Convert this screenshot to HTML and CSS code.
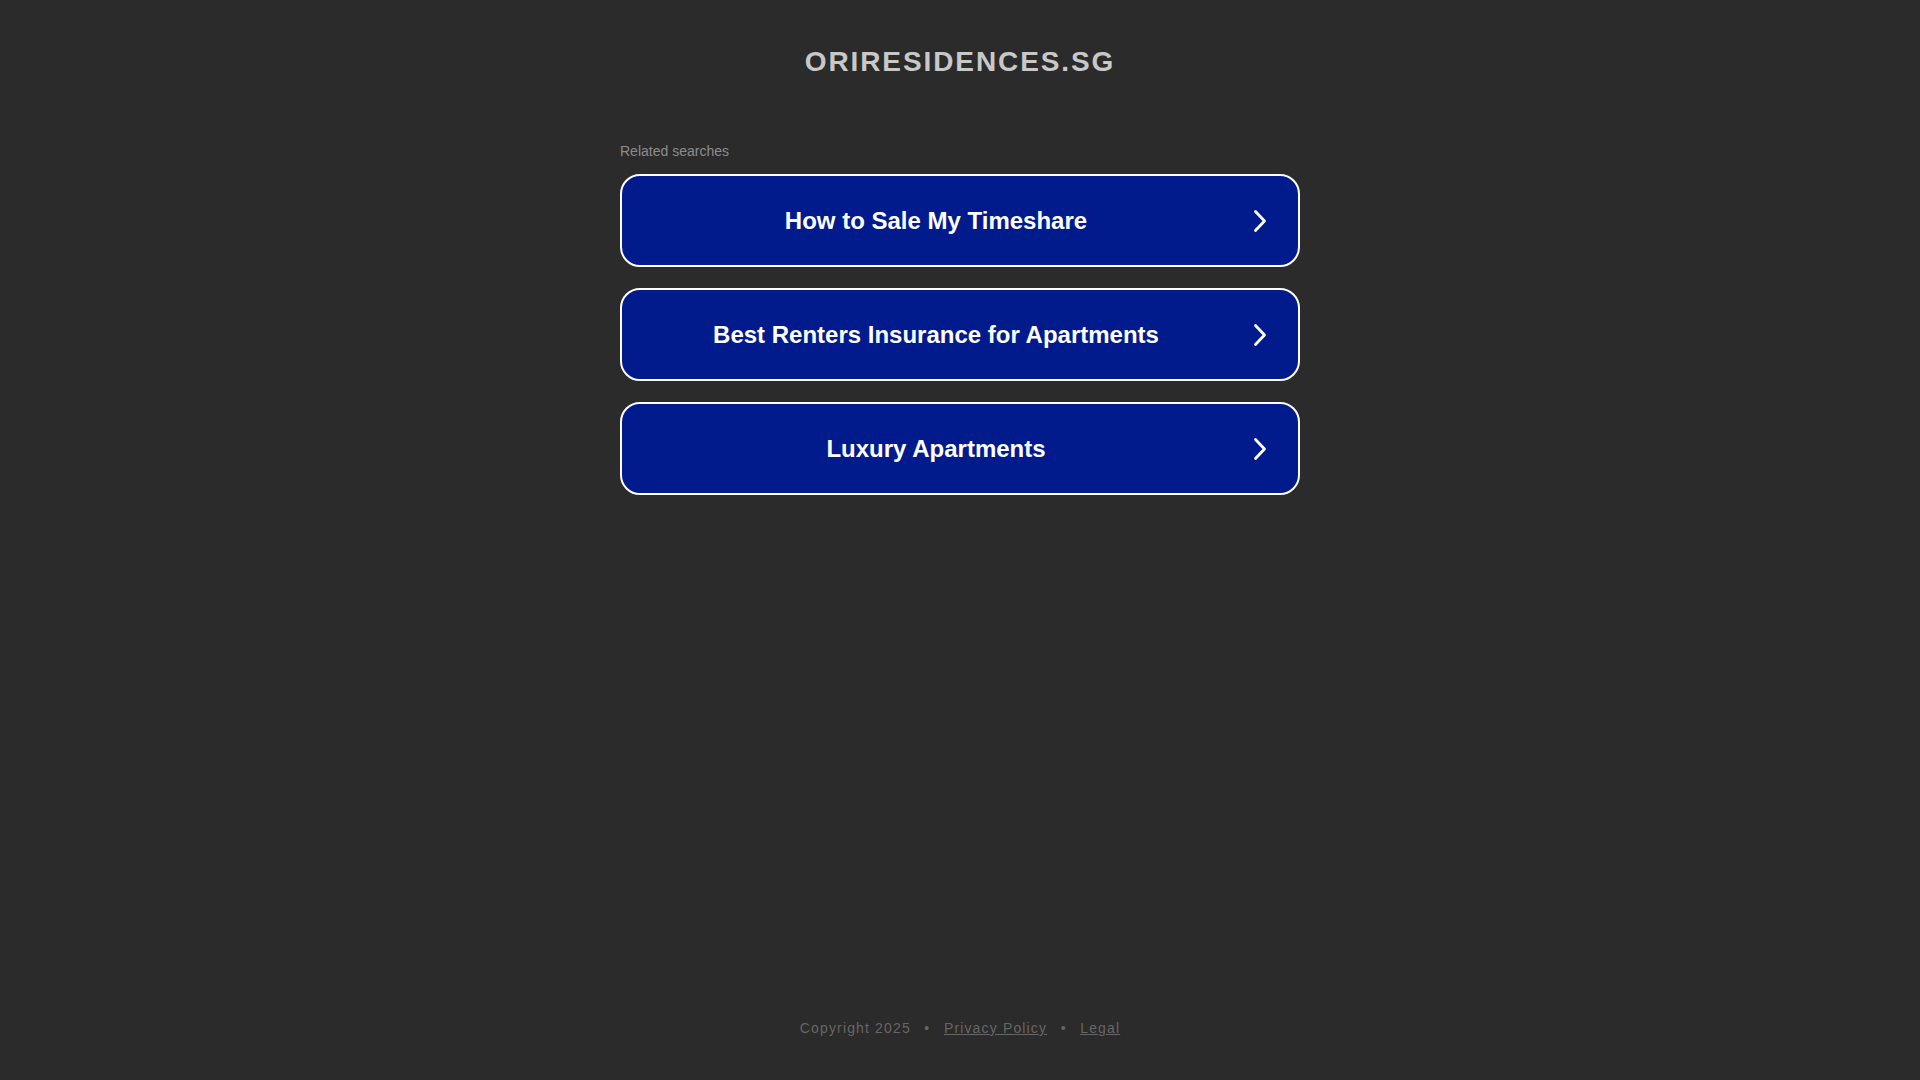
FILE: index.html
```html
<!DOCTYPE html>
<html lang="en">
<head>
<meta charset="utf-8">
<title>oriresidences.sg</title>
<link rel="stylesheet" href="styles.css">
</head>
<body>
<div class="page">
  <header class="header">
    <h1 class="domain">oriresidences.sg</h1>
  </header>
  <main class="content">
    <div class="related">Related searches</div>
    <ul class="links">
      <li><a class="link" href="#"><span class="link-text">How to Sale My Timeshare</span><svg class="chev" width="24" height="24" viewBox="0 0 24 24"><path d="M7.5 2.5 L16.5 12 L7.5 21.5" fill="none" stroke="#fff" stroke-width="2.8" stroke-linecap="round" stroke-linejoin="round"/></svg></a></li>
      <li><a class="link" href="#"><span class="link-text">Best Renters Insurance for Apartments</span><svg class="chev" width="24" height="24" viewBox="0 0 24 24"><path d="M7.5 2.5 L16.5 12 L7.5 21.5" fill="none" stroke="#fff" stroke-width="2.8" stroke-linecap="round" stroke-linejoin="round"/></svg></a></li>
      <li><a class="link" href="#"><span class="link-text">Luxury Apartments</span><svg class="chev" width="24" height="24" viewBox="0 0 24 24"><path d="M7.5 2.5 L16.5 12 L7.5 21.5" fill="none" stroke="#fff" stroke-width="2.8" stroke-linecap="round" stroke-linejoin="round"/></svg></a></li>
    </ul>
  </main>
  <footer class="footer">
    <span>Copyright 2025</span><span class="sep">•</span><a href="#" class="flink">Privacy Policy</a><span class="sep">•</span><a href="#" class="flink">Legal</a>
  </footer>
</div>
</body>
</html>
```

FILE: styles.css
```css
html, body {
  margin: 0;
  padding: 0;
  background: #2b2b2b;
}
body {
  font-family: "Liberation Sans", Arial, Helvetica, sans-serif;
}
.page {
  display: flex;
  flex-direction: column;
  min-height: 100vh;
}
.header {
  padding-top: 41px;
  text-align: center;
}
.domain {
  margin: 0;
  font-size: 28px;
  line-height: 42px;
  font-weight: bold;
  color: #c8c8c8;
  text-transform: uppercase;
  letter-spacing: 1.9px;
}
.content {
  width: 680px;
  margin: 0 auto;
  flex: 1;
}
.related {
  margin-top: 58px;
  font-size: 14px;
  line-height: 20px;
  color: #8c8c8c;
}
.links {
  list-style: none;
  margin: 13px 0 0;
  padding: 0;
}
.links li {
  margin-bottom: 21px;
}
.link {
  display: flex;
  align-items: center;
  box-sizing: border-box;
  height: 93px;
  border: 2px solid #fff;
  border-radius: 20px;
  background: #011a8c;
  color: #fff;
  text-decoration: none;
  padding-right: 26px;
}
.link-text {
  flex: 1;
  text-align: center;
  font-size: 24px;
  font-weight: bold;
  line-height: 30px;
  padding-left: 2px;
  padding-top: 1px;
}
.chev {
  display: block;
}
.footer {
  text-align: center;
  font-size: 14px;
  line-height: 20px;
  letter-spacing: 1.15px;
  color: #666;
  padding-bottom: 42px;
}
.flink {
  color: #666;
  text-decoration: underline;
}
.sep {
  margin: 0 13.5px;
}
```
